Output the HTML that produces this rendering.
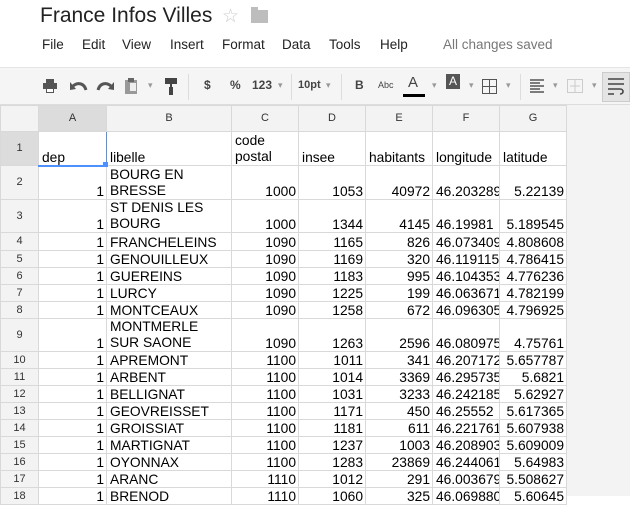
<!DOCTYPE html>
<html><head><meta charset="utf-8"><style>
*{margin:0;padding:0;box-sizing:border-box}
body{width:630px;height:496px;overflow:hidden;background:#fff;font-family:"Liberation Sans",Arial,sans-serif;position:relative}
.title{position:absolute;left:40px;top:4px;font-size:21px;color:#222}
.star{position:absolute;left:222px;top:5px;font-size:19px;color:#ccc}
.folder{position:absolute;left:251px;top:10px;width:17px;height:13px;background:#bdbdbd}
.folder:before{content:"";position:absolute;left:0;top:-3px;width:7px;height:3px;background:#bdbdbd}
.menu{position:absolute;top:37px;font-size:13.5px;color:#222}
.saved{color:#777}
.tb{position:absolute;left:0;top:67px;width:630px;height:38px;background:#f5f5f5;border-top:1px solid #e5e5e5;border-bottom:1px solid #ddd}
.ti{position:absolute;top:10px;font-size:12px;font-weight:bold;color:#444}
.sep{position:absolute;top:6px;width:1px;height:26px;background:#ddd}
.dd{position:absolute;top:12px;font-size:9px;color:#999}
table{position:absolute;left:0;top:105px;width:566px;border-collapse:collapse;table-layout:fixed;font-size:13.8px;color:#000}
td{border:1px solid #d9d9d9;overflow:hidden;white-space:nowrap;vertical-align:bottom;padding:0 2px 0 3px;line-height:15px}
td.h{background:#f3f3f3;text-align:center;vertical-align:middle;font-size:11px;color:#333;padding:0}
td.s{background:#dcdcdc}
td.r{text-align:right}
td.w{line-height:16px}
.rest{position:absolute;left:566px;top:105px;width:64px;height:391px;background:#f3f3f3}
</style></head><body>
<div class="title">France Infos Villes</div>
<div class="star">☆</div><div class="folder"></div>
<div class="menu" style="left:42px">File</div>
<div class="menu" style="left:82px">Edit</div>
<div class="menu" style="left:122px">View</div>
<div class="menu" style="left:170px">Insert</div>
<div class="menu" style="left:222px">Format</div>
<div class="menu" style="left:282px">Data</div>
<div class="menu" style="left:329px">Tools</div>
<div class="menu" style="left:380px">Help</div>
<div class="menu saved" style="left:443px">All changes saved</div>
<div class="tb">
<svg style="position:absolute;left:42px;top:10px" width="16" height="16"><rect x="4" y="1" width="8" height="4" fill="#555"/><rect x="1" y="5" width="14" height="6" fill="#555"/><rect x="4" y="10" width="8" height="5" fill="#555"/><rect x="5" y="11" width="6" height="3" fill="#fff"/></svg>
<svg style="position:absolute;left:70px;top:12px" width="18" height="12"><path d="M16 10 C14 3 8 2 3 6" stroke="#555" stroke-width="3" fill="none"/><path d="M0 2 L6 9 L0 10Z" fill="#555"/></svg>
<svg style="position:absolute;left:96px;top:12px" width="18" height="12"><path d="M2 10 C4 3 10 2 15 6" stroke="#555" stroke-width="3" fill="none"/><path d="M18 2 L12 9 L18 10Z" fill="#555"/></svg>
<svg style="position:absolute;left:124px;top:9px" width="14" height="18"><rect x="1" y="3" width="12" height="14" fill="#999"/><rect x="4" y="1" width="6" height="4" fill="#666"/><rect x="6" y="6" width="6" height="8" fill="#eee"/></svg>
<div class="dd" style="left:148px">▾</div>
<svg style="position:absolute;left:164px;top:9px" width="14" height="20"><rect x="1" y="1" width="12" height="6" fill="#444"/><rect x="6" y="7" width="2" height="4" fill="#444"/><rect x="5" y="10" width="4" height="8" fill="#444"/></svg>
<div class="sep" style="left:188px"></div>
<div class="ti" style="left:204px">$</div>
<div class="ti" style="left:230px">%</div>
<div class="ti" style="left:252px">123</div><div class="dd" style="left:278px">▾</div>
<div class="sep" style="left:291px"></div>
<div class="ti" style="left:298px;font-size:11px;top:11px">10pt</div><div class="dd" style="left:326px">▾</div>
<div class="sep" style="left:341px"></div>
<div class="ti" style="left:355px">B</div>
<div class="ti" style="left:378px;font-size:9px;top:12px;font-weight:normal">Abc</div>
<div class="ti" style="left:408px;font-size:15px;top:6px;font-weight:normal">A</div><div style="position:absolute;left:403px;top:26px;width:22px;height:3px;background:#000"></div>
<div class="dd" style="left:432px">▾</div>
<div style="position:absolute;left:446px;top:6px;width:14px;height:15px;background:#555;color:#fff;font-size:12px;text-align:center;line-height:15px">A</div>
<div class="dd" style="left:469px">▾</div>
<svg style="position:absolute;left:482px;top:11px" width="15" height="15"><rect x="0.5" y="0.5" width="14" height="14" fill="none" stroke="#555"/><path d="M7.5 0V15M0 7.5H15" stroke="#555"/></svg>
<div class="dd" style="left:506px">▾</div>
<div class="sep" style="left:520px"></div>
<svg style="position:absolute;left:530px;top:11px" width="14" height="14"><path d="M0 1H14M0 4H10M0 7H14M0 10H10M0 13H14" stroke="#555" stroke-width="1.5"/></svg>
<div class="dd" style="left:553px">▾</div>
<svg style="position:absolute;left:567px;top:11px" width="16" height="14"><rect x="0.5" y="0.5" width="15" height="13" fill="none" stroke="#ccc"/><path d="M8 0V14M3 7H13" stroke="#ccc"/></svg>
<div class="dd" style="left:592px">▾</div>
<div style="position:absolute;left:602px;top:4px;width:28px;height:30px;background:#e4e4e4;border:1px solid #ccc"></div>
<svg style="position:absolute;left:608px;top:10px" width="16" height="18"><path d="M0 1H16M0 6H16M0 11H12M0 16H6" stroke="#444" stroke-width="1.6"/><path d="M12 11 C16 11 16 16 12 16" stroke="#444" stroke-width="1.6" fill="none"/></svg>
</div>
<div class="rest"></div>
<table>
<colgroup><col style="width:38px"><col style="width:68px"><col style="width:125px"><col style="width:67px"><col style="width:67px"><col style="width:67px"><col style="width:67px"><col style="width:67px"></colgroup>
<tr style="height:26px"><td class="h" style="background:#f3f3f3"></td><td class="h s">A</td><td class="h">B</td><td class="h">C</td><td class="h">D</td><td class="h">E</td><td class="h">F</td><td class="h">G</td></tr>
<tr style="height:34px"><td class="h s">1</td><td style="border-right:1px solid #4d90fe;border-bottom:2px solid #4d90fe">dep</td><td>libelle</td><td class="w">code<br>postal</td><td>insee</td><td>habitants</td><td>longitude</td><td>latitude</td></tr>
<tr style="height:34px"><td class="h">2</td><td class="r">1</td><td class="w">BOURG EN<br>BRESSE</td><td class="r">1000</td><td class="r">1053</td><td class="r">40972</td><td>46.203289</td><td class="r">5.22139</td></tr>
<tr style="height:33px"><td class="h">3</td><td class="r">1</td><td class="w">ST DENIS LES<br>BOURG</td><td class="r">1000</td><td class="r">1344</td><td class="r">4145</td><td>46.19981</td><td class="r">5.189545</td></tr>
<tr style="height:18px"><td class="h">4</td><td class="r">1</td><td>FRANCHELEINS</td><td class="r">1090</td><td class="r">1165</td><td class="r">826</td><td>46.073409</td><td class="r">4.808608</td></tr>
<tr style="height:17px"><td class="h">5</td><td class="r">1</td><td>GENOUILLEUX</td><td class="r">1090</td><td class="r">1169</td><td class="r">320</td><td>46.119115</td><td class="r">4.786415</td></tr>
<tr style="height:17px"><td class="h">6</td><td class="r">1</td><td>GUEREINS</td><td class="r">1090</td><td class="r">1183</td><td class="r">995</td><td>46.104353</td><td class="r">4.776236</td></tr>
<tr style="height:17px"><td class="h">7</td><td class="r">1</td><td>LURCY</td><td class="r">1090</td><td class="r">1225</td><td class="r">199</td><td>46.063671</td><td class="r">4.782199</td></tr>
<tr style="height:17px"><td class="h">8</td><td class="r">1</td><td>MONTCEAUX</td><td class="r">1090</td><td class="r">1258</td><td class="r">672</td><td>46.096305</td><td class="r">4.796925</td></tr>
<tr style="height:33px"><td class="h">9</td><td class="r">1</td><td class="w">MONTMERLE<br>SUR SAONE</td><td class="r">1090</td><td class="r">1263</td><td class="r">2596</td><td>46.080975</td><td class="r">4.75761</td></tr>
<tr style="height:17px"><td class="h">10</td><td class="r">1</td><td>APREMONT</td><td class="r">1100</td><td class="r">1011</td><td class="r">341</td><td>46.207172</td><td class="r">5.657787</td></tr>
<tr style="height:17px"><td class="h">11</td><td class="r">1</td><td>ARBENT</td><td class="r">1100</td><td class="r">1014</td><td class="r">3369</td><td>46.295735</td><td class="r">5.6821</td></tr>
<tr style="height:17px"><td class="h">12</td><td class="r">1</td><td>BELLIGNAT</td><td class="r">1100</td><td class="r">1031</td><td class="r">3233</td><td>46.242185</td><td class="r">5.62927</td></tr>
<tr style="height:17px"><td class="h">13</td><td class="r">1</td><td>GEOVREISSET</td><td class="r">1100</td><td class="r">1171</td><td class="r">450</td><td>46.25552</td><td class="r">5.617365</td></tr>
<tr style="height:17px"><td class="h">14</td><td class="r">1</td><td>GROISSIAT</td><td class="r">1100</td><td class="r">1181</td><td class="r">611</td><td>46.221761</td><td class="r">5.607938</td></tr>
<tr style="height:17px"><td class="h">15</td><td class="r">1</td><td>MARTIGNAT</td><td class="r">1100</td><td class="r">1237</td><td class="r">1003</td><td>46.208903</td><td class="r">5.609009</td></tr>
<tr style="height:17px"><td class="h">16</td><td class="r">1</td><td>OYONNAX</td><td class="r">1100</td><td class="r">1283</td><td class="r">23869</td><td>46.244061</td><td class="r">5.64983</td></tr>
<tr style="height:17px"><td class="h">17</td><td class="r">1</td><td>ARANC</td><td class="r">1110</td><td class="r">1012</td><td class="r">291</td><td>46.003679</td><td class="r">5.508627</td></tr>
<tr style="height:17px"><td class="h">18</td><td class="r">1</td><td>BRENOD</td><td class="r">1110</td><td class="r">1060</td><td class="r">325</td><td>46.069880</td><td class="r">5.60645</td></tr>
</table>
<div style="position:absolute;left:103px;top:162px;width:5px;height:5px;background:#4d90fe"></div>
</body></html>
